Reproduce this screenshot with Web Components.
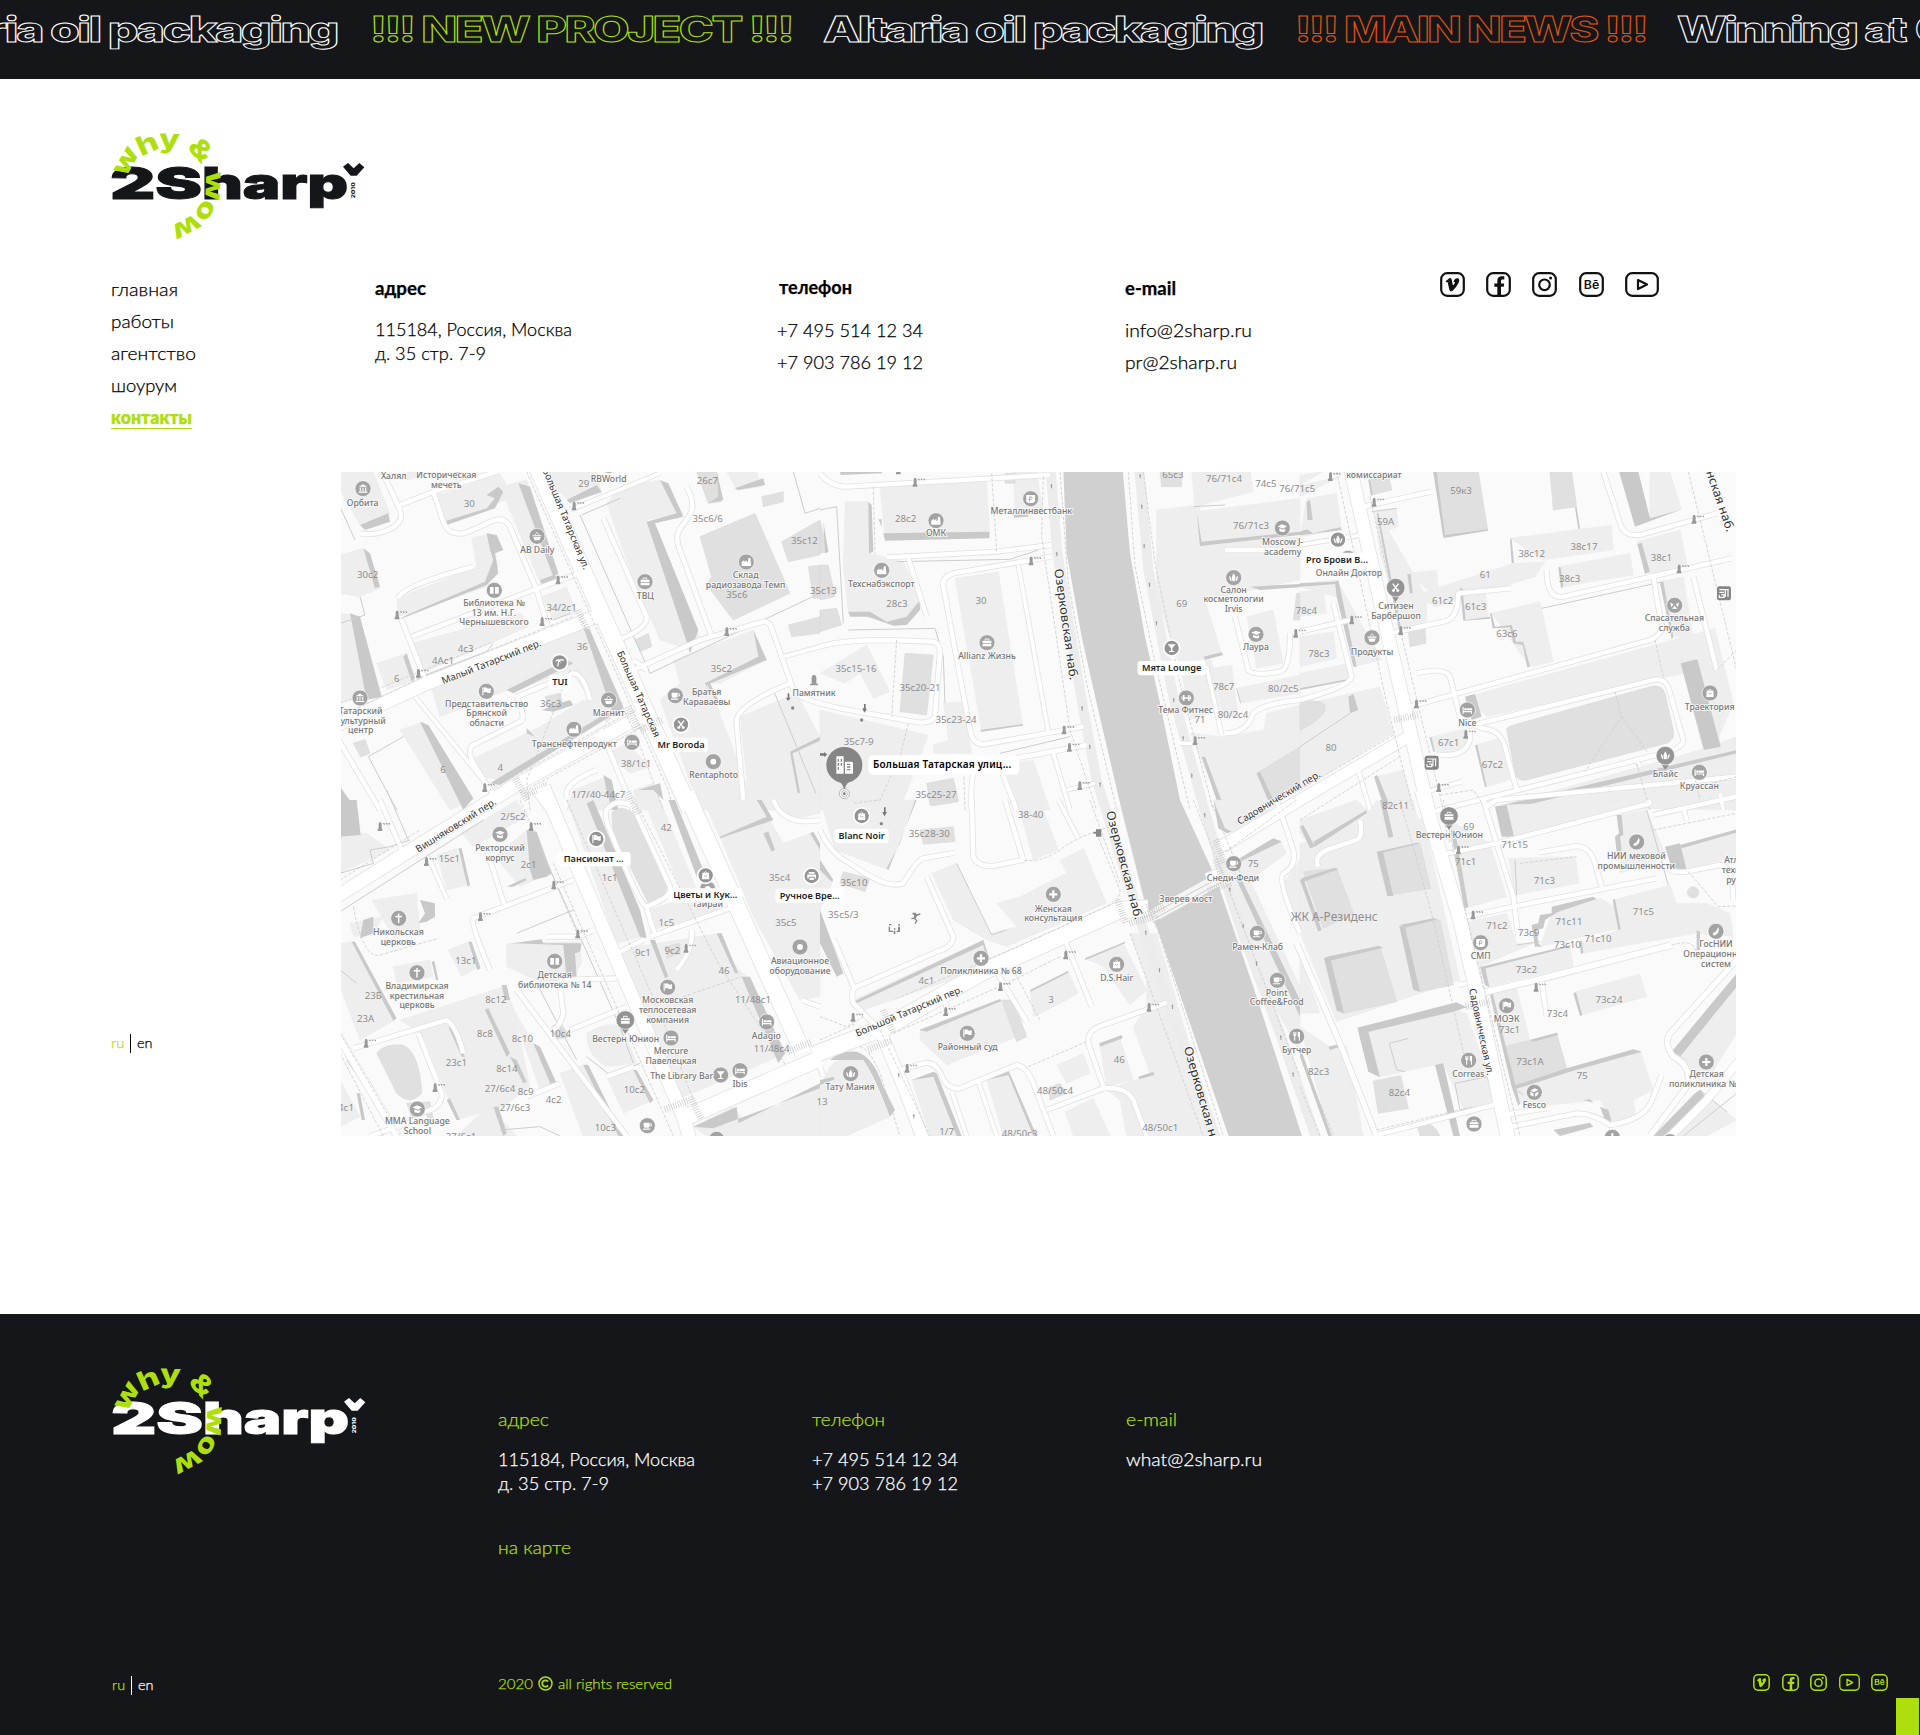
<!DOCTYPE html>
<html lang="ru">
<head>
<meta charset="utf-8">
<title>2Sharp — контакты</title>
<style>
html,body{margin:0;padding:0;background:#fff}
body{font-family:Lato,"Open Sans",sans-serif;font-weight:300;font-size:18px;color:#000;--green:#aedf0d;--dark:#15161a}
</style>
</head>
<body>
<contacts-page></contacts-page>
<script>
const def=(name,html,after)=>customElements.define(name,class extends HTMLElement{
  connectedCallback(){
    if(this.shadowRoot)return;
    const r=this.attachShadow({mode:'open'});
    r.innerHTML=typeof html==='function'?html(this):html;
    if(after)after(this,r);
  }
});

/* one line of text widened to a set measure */
def('fit-text','<style>:host{display:block;white-space:nowrap;width:max-content;-webkit-text-stroke:.25px currentColor}span{display:inline-block;transform-origin:0 50%}</style><span><slot></slot></span>',(el,r)=>{
  const s=r.querySelector('span'),w=+el.getAttribute('w');
  if(w){s.style.transform=`scaleX(${(w/s.getBoundingClientRect().width).toFixed(4)})`;el.style.width=w+'px';}
});

/* running line */
def('news-ticker',()=>{
  const items=[[-102,439,'Altaria oil packaging','#fff'],[370,422,'!!! NEW PROJECT !!!','#aedf0d'],[823,439,'Altaria oil packaging','#fff'],[1295,351,'!!! MAIN NEWS !!!','#e0560f'],[1677,228,'Winning at','#fff'],[1915,150,'Cannes','#fff']];
  return `<style>:host{display:block;height:79px;background:var(--dark);overflow:hidden}svg{display:block}text{font:800 35px Inter,sans-serif;letter-spacing:-1.800px;fill:var(--dark);fill-opacity:0;stroke-width:.95}</style><svg width="1920" height="79" viewBox="0 0 1920 79">${items.map(i=>`<text x="${i[0]}" y="41.8" textLength="${i[1]}" lengthAdjust="spacingAndGlyphs" stroke="${i[3]}">${i[2]}</text>`).join('')}</svg>`;
});

/* logo */
def('sharp-logo',()=>{
  const l=[['w',110,128,-60],['h',174,80,-24],['y',238,66,2],['&amp;',328,97,48],['w',368,201,92],['o',345,274,122],['w',288,322,152]];
  return `<style>:host{display:block;width:254px;height:106px}svg{display:block;overflow:visible}text{font-family:Inter,sans-serif}.b{font-weight:900;font-size:133px;fill:currentColor;stroke:currentColor;stroke-width:3}.g{font-weight:800;font-size:79px;fill:var(--green);text-anchor:middle}</style>
  <svg width="254" height="106" viewBox="63 42 762 318"><text class="b" x="60" y="240" textLength="276" lengthAdjust="spacingAndGlyphs">2S</text><text class="b" x="336" y="240" textLength="438" lengthAdjust="spacingAndGlyphs">harp</text>
  ${l.map(a=>`<text class="g" transform="translate(${a[1]} ${a[2]}) rotate(${a[3]}) scale(1.28 1)" y="21">${a[0]}</text>`).join('')}
  <path fill="currentColor" d="M759 143l15-11 17 16 17-16 15 13-23 25h-18z"/><text transform="translate(795 238) rotate(-90)" textLength="48" lengthAdjust="spacingAndGlyphs" font-size="13" font-weight="800" fill="currentColor">2010</text></svg>`;
});

/* social icons */
def('social-icon',el=>{
  const k=el.getAttribute('kind'),wide=k==='youtube',s=+el.getAttribute('size')||25,h=s,w=wide?(s<20?21:34):s;
  const g={
   vimeo:'<path fill="currentColor" stroke="none" d="M5.6 9.2L9 6.4c1.5-.9 2.5-.2 2.8 1.6l.7 4c.4 1.8 1 1.3 1.9-.3.8-1.400.7-2-.9-1.600.7-2.900 2.300-4.200 4.300-3.800 1.700.4 1.700 2.400.8 4.400-1.400 3-4 6.500-6.200 8.200-1.500 1-2.600.1-3.100-1.500L7.700 10.600c-.3-.9-.6-.7-1.500-.2z"/>',
   facebook:'<path fill="currentColor" stroke="none" d="M11.300 23.500v-8.700H8.300v-3.400h3V9c0-3.200 1.700-4.700 4.400-4.700h2.600v3.300h-1.700c-1.300 0-1.600.6-1.600 1.700v2.100h3.200l-.5 3.400H15v8.700z"/>',
   instagram:'<circle cx="12.500" cy="12.800" r="5.300"/><circle cx="18.600" cy="6" r="1.500" fill="currentColor" stroke="none"/>',
   behance:'<text x="4.800" y="16.800" font-family="Inter,sans-serif" font-weight="600" font-size="11.500" textLength="15.500" lengthAdjust="spacingAndGlyphs" fill="currentColor" stroke="none">Bē</text>',
   youtube:'<path stroke-linejoin="round" d="M13 8l9 4.500-9 4.500z"/>'};
  return `<style>:host{display:block}svg{display:block}</style><svg width="${w}" height="${h}" viewBox="0 0 ${wide?34:25} 25" preserveAspectRatio="none" fill="none" stroke="currentColor" stroke-width="2.200"><rect x="1.200" y="1.200" width="${wide?31.600:22.600}" height="22.600" rx="6"/>${g[k]}</svg>`;
});

def('lang-switch','<style>:host{display:flex;font-size:14.500px;line-height:19px;height:19px;-webkit-text-stroke:.25px currentColor}b{font-weight:inherit;color:var(--green);width:19px}i{width:1px;background:currentColor;margin-right:6px}span,b{position:relative;top:-1px}</style><b>ru</b><i></i><span>en</span>');

def('site-nav',`<style>:host{display:block;width:264px;line-height:32px}nav{display:flex;flex-direction:column;align-items:flex-start}.on{font-weight:800;color:var(--green);line-height:24px;height:24px;margin-top:4px;border-bottom:1px solid var(--green);box-sizing:border-box}</style>
<nav><fit-text w="67">главная</fit-text><fit-text w="63">работы</fit-text><fit-text w="85">агентство</fit-text><fit-text w="66">шоурум</fit-text><fit-text w="81" class="on">контакты</fit-text></nav>`);

/* contact column */
def('info-block','<style>:host{display:block;line-height:24px}.h{margin-bottom:var(--gap,17px);font-weight:var(--hw,700);color:var(--hc,inherit)}</style><div class="h"><slot name="title"></slot></div><slot></slot>');

/* ---------- city map ---------- */
/* each sheet is drawn at three units per pixel; o is the sheet's corner on the page */
const SHEETS=[
{o:[340,470],
 l:['0,5 100,5 150,130 60,165 0,60','200,5 290,5 200,30','310,70 480,10 520,80 320,160 275,70','480,50 560,30 655,320 600,340','395,205 450,190 475,290 440,350 175,440 170,385 410,290','0,255 70,235 120,355 60,380 0,370','0,430 40,435 100,670 0,700','110,580 200,550 225,630 140,660','215,520 545,430 565,470 245,610','605,380 680,350 710,430 640,450','270,640 500,560 690,480 730,470 830,720 800,760 690,600 560,650 490,665 300,740','390,870 600,770 730,690 850,700 480,930 420,920','590,5 770,5 785,70 685,90','800,100 840,50 960,30 1030,130 920,150 1080,500 1050,540 960,510 870,300','1000,570 1240,480 1280,570 1140,640 1100,640 1120,680 1250,1020 1080,1020 960,690 1020,640','180,780 250,755 400,990 330,1020','800,850 860,820 930,890 870,910','1200,740 1370,670 1440,800 1440,1020 1230,1020','700,960 800,920 830,1020 680,1020','880,960 940,940 970,1020 890,1020','1160,5 1250,5 1265,50 1190,60'],
 m:['1080,200 1245,130 1350,370 1180,450 1100,345 1115,320','1070,5 1130,5 1145,95 1105,100','1325,215 1440,150 1440,255 1345,275','1265,80 1330,65 1330,95 1270,110','1405,290 1440,285 1440,385 1420,385','1345,465 1440,440 1440,490 1355,500','885,510 925,490 935,530 900,545','40,820 75,808 90,850 62,862','615,680 660,670 670,710 630,720'],
 d:['60,165 145,130 150,155 75,180','310,155 440,115 465,85 440,75 475,50 490,65 465,115 320,165','535,40 570,50 655,310 640,320','600,330 640,315 660,325 605,342','440,190 470,195 490,240 465,250 475,310 440,345 175,450 200,435 435,335 460,270 450,240','70,235 90,250 120,350 105,355','30,430 60,440 125,680 80,690','960,30 985,40 1030,140 945,160 1075,480 1050,550 1035,500 920,155 1010,130','1240,480 1280,570 1100,645 1105,660 1095,640 1255,560','680,90 770,45 785,65 690,100','1130,5 1150,90 1105,100 1135,80','730,470 750,480 850,710 820,735','500,660 680,570 700,580 520,670','450,940 840,705 850,715 480,945','240,755 265,765 400,985 370,1020','190,560 200,550 225,625 215,635','340,5 370,5 350,30','1185,55 1270,25 1275,45 1195,60','0,950 50,1020 0,1020','790,915 815,930 835,1020 815,1020','605,720 660,700 690,690 700,705 640,725','560,775 585,800 560,790','895,960 960,940 970,990 940,960','1100,640 1110,640 1135,690 1125,690','1350,845 1440,800 1440,812 1358,850 1390,1020 1382,1020'],
 w:[[50,'M590,-10L790,440L1050,1020'],[40,'M-10,765L260,640L780,435'],[40,'M900,740L520,950L440,1000'],[14,'M60,190C120,200 200,170 180,120L120,-10'],[14,'M180,105L280,65L470,5'],[14,'M280,70C310,130 300,200 370,190C440,170 480,120 510,170L590,360L630,490'],[14,'M175,385Q180,350 400,290'],[14,'M730,305L580,360L215,500'],[14,'M185,450L260,640'],[12,'M690,120L960,10'],[14,'M790,145L920,440Q925,475 835,510'],[14,'M1040,50C1100,160 980,150 1020,240L1115,500'],[14,'M880,600L1080,510L1270,455Q1290,450 1300,490L1360,660Q1370,680 1440,700'],[12,'M1330,560L1440,530'],[12,'M225,680L470,980'],[14,'M530,680L700,610Q730,610 750,690'],[14,'M530,680Q560,750 540,755L400,825Q380,835 400,880L470,990'],[14,'M880,570L920,600'],[14,'M780,770L840,920L880,1020'],[14,'M680,980Q670,940 770,900'],[14,'M1210,990L1190,760Q1180,710 1350,640'],[40,'M590,950L640,1020'],[14,'M-10,800L120,1020']],
 t:['M560,5L985,960L1000,1020','M720,440L890,800L970,1020','M0,740L250,620L700,440','M0,700L130,650L460,515','M450,960L880,720','M540,970L870,790L960,740','M690,600L560,930L570,1020','M795,920L800,980'],
 f:['M720,135L930,610L1440,370','M725,135L840,85','M190,800L85,860L170,1020','M0,110L45,210','M1360,5L1395,130L1440,115','M60,380L75,435L0,460','M460,520L440,545L230,625','M690,430L640,450','M1300,660L1440,1000'],
 n:[['30',388,110],['29',731,52],['26с7',1102,41],['35с6/6',1103,156],['35с12',1393,221],['35с6',1191,383],['30с2',83,323],['34/2с1',665,424],['4с3',377,545],['4Ас1',309,581],['6',170,636],['36',727,541],['36с3',632,710],['35с2',1144,605],['6',309,908],['4',481,904],['38/1с1',888,890],['1/7/40-44с7',775,985],['35с13',1450,373]],
 p:[['museum',69,56,'Орбита',68,107],['',0,0,'Халял',161,28],['',0,0,'Историческая|мечеть',319,24],['dot',806,-14,'RBWorld',806,35],['basket',591,199,'AB Daily',592,249],['book',463,361,'Библиотека №|13 им. Н.Г.|Чернышевского',462,408],['case',915,335,'ТВЦ',916,387],['factory',1219,276,'Склад|радиозавода Темп',1217,325],['flag',439,664,'Представительство|Брянской|области',440,710],['basket',806,690,'Магнит',806,738],['factory',702,778,'Транснефтепродукт',703,830],['museum',60,684,'Татарский|культурный|центр',62,732],['cup',1006,677,'Братья|Караваевы',1100,676],['bed',876,817,'',0,0],['dot',1120,875,'Rentaphoto',1121,923]],
 k:[['palm',659,577,'TUI',660,645,66],['scissors',1023,764,'Mr Boroda',1023,833,160]],
 s:[[607,0,67.5,29,'Большая Татарская ул.',325],[830,548,66,29,'Большая Татарская',280],[310,643,-21.500,29,'Малый Татарский пер.',318]],
 g:[[702,108],[654,330],[171,435],[606,455],[235,610],[1160,485],[434,953]],z:[[730,455,65],[545,960,60],[590,960,-25],[880,745,65],[935,765,-25]]},
{o:[820,470],
 l:['180,50 500,35 510,200 195,205','580,5 650,5 670,130 585,140','75,95 145,95 150,250 250,275 300,380 290,420 230,460 85,430 70,290','405,325 535,305 608,765 485,785','0,610 140,525 210,665 160,685 120,610 75,640','0,720 325,795 240,1020 0,1020','370,700 430,695 455,850 340,850 340,825 385,810','1010,120 1140,105 1140,220 1440,200 1440,330 1155,390 1205,550 1080,590 1010,380','1115,5 1290,5 1300,65 1125,110','1130,125 1440,85 1440,190 1140,220','1280,440 1360,420 1390,580 1310,595','1080,580 1175,570 1200,720 1110,750','1175,595 1235,585 1255,740 1210,740','1250,655 1440,615 1440,670 1260,700','1110,790 1210,800 1330,780 1340,730 1440,705 1440,960 1290,1020 1210,1020','550,880 640,870 690,1020 600,1020','60,5 180,5 190,10'],
 m:['255,550 340,555 320,735 240,725','320,940 400,925 415,990 330,1005','1020,5 1085,5 1085,50 1025,50','0,420 50,415 65,465 0,485','0,285 25,285 45,380 0,390','1430,370 1440,370 1440,450 1420,450','0,155 25,245 0,250','1310,910 1440,830 1440,960 1360,1000','555,10 585,10 585,40 555,40'],
 d:['190,190 508,185 508,205 195,212','145,95 155,105 160,245 147,250','85,425 150,425 200,455 260,440 300,390 300,420 260,465 220,467 145,440 90,440','480,780 608,762 608,767 485,785','1130,125 1145,215 1440,185 1440,195 1140,228','1310,910 1320,905 1365,1000 1350,1005','1150,560 1205,547 1210,555 1155,570','60,5 185,5 185,10 62,15','10,155 25,245 15,250','175,148 185,148 185,170','1290,350 1440,342 1440,352 1320,360','580,135 625,130 625,140 582,143','1145,860 1155,860 1215,1020 1200,1020'],
 w:[[14,'M0,10Q30,50 80,50L690,15'],[14,'M200,262L530,245L695,225'],[14,'M265,265L320,440'],[14,'M695,260L400,310Q365,320 370,350L450,780Q460,830 500,822L790,770'],[12,'M595,285L685,785'],[14,'M0,530Q60,510 200,510L340,515Q365,520 358,570L345,740Q330,765 280,755L60,715L0,700'],[14,'M800,825L560,870L470,895Q450,910 455,1020'],[12,'M700,850L750,1020'],[12,'M740,960L825,940'],[14,'M1215,790Q1280,790 1300,730Q1330,700 1440,690'],[14,'M1245,440L1285,600Q1300,620 1380,605Q1410,600 1410,490'],[14,'M1215,240L1440,240'],[12,'M1080,820L1130,820'],[12,'M1160,590L1205,795'],[14,'M540,890L590,1020']],
 t:['M160,50L165,250','M515,10L530,245','M670,20L665,200L750,780L830,1020','M720,5L745,340L800,640L890,1020','M925,5L945,290L1010,600L1110,1020','M970,5L1005,280L1080,640L1180,1020','M230,510L215,740','M265,760L240,860L180,990L100,1000','M430,860L435,1020'],
 f:['M0,120L50,110L70,460','M85,480L345,475L370,560L375,700','M230,275L570,268L655,240','M1120,110L1215,105','M540,850L750,800','M1250,655L1262,700'],
 n:[['28с2',257,155],['28с3',231,411],['30',483,403],['35с15-16',108,607],['35с20-21',300,662],['35с23-24',408,758],['35с7-9',116,825],['35с25-27',348,985],['65с3',1059,23],['76/71с4',1212,35],['74с5',1338,50],['76/71с5',1432,67],['76/71с3',1293,177],['69',1085,411],['78с3',1497,561],['78с4',1459,433],['78с7',1211,661],['80/2с5',1390,667],['80/2с4',1239,743],['71',1140,760]],
 p:[['factory',348,152,'ОМК',348,197],['factory',185,301,'Техснабэкспорт',184,351],['rub',632,86,'Металлинвестбанк',634,133],['case',501,518,'Allianz Жизнь',501,567],['cap',1387,174,'Moscow J-|academy',1388,225],['flower',1241,323,'Салон|косметологии|Irvis',1241,368],['cap',1308,493,'Лаура',1308,541],['dumb',1099,684,'Тема Фитнес',1097,730],['statue',-18,630,'Памятник',-18,678]],
 k:[['bar',1055,534,'Мята Lounge',1055,603,205]],
 s:[[703,298,82,36,'Озерковская наб.',337]],
 g:[[285,37],[633,273],[732,780],[748,832],[779,947],[1125,812],[1427,490],[235,0]],z:[]},
{o:[1300,470],
 l:['0,15 70,5 0,45','0,45 120,20 0,80','20,85 110,70 125,180 0,200','0,340 110,330 245,570 165,590 110,380 0,350','225,125 290,115 295,170 265,180 380,380 380,470 310,480 240,250','325,310 410,300 415,355 390,365','330,380 640,280 735,275 705,320 410,410 330,375','630,205 935,165 940,240 730,270','775,290 990,250 1000,315 790,350','480,360 555,345 565,445 500,450','575,430 720,395 760,575 690,590','400,365 460,355 460,395 400,410','1010,215 1140,180 1165,300 1045,310','1080,335 1150,320 1180,500 1120,500','500,680 1245,475 1300,700 1240,840 1200,600 560,740','1140,570 1240,570 1260,830 1210,840','590,1010 1200,840 1310,800 1310,1020','0,500 100,485 110,565 0,590','0,610 145,580 145,630 0,660','0,365 70,360 80,430 0,440','0,705 240,650 280,790 0,960','395,800 500,775 510,835 410,850','525,825 600,805 630,930 560,950','1050,5 1110,5 1145,120 1050,145','225,920 310,900 345,1020 260,1020'],
 m:['400,5 535,5 563,180 435,200','750,5 815,5 830,110 760,120','205,10 265,5 275,60 215,75','325,485 375,475 378,520 330,530','620,780Q620,770 640,765L1050,650Q1085,640 1095,670L1120,780Q1125,810 1100,820L680,930Q650,935 645,910','0,692Q80,690 76,710Q80,740 0,782'],
 d:['957,5 1015,5 1050,145 1140,120 1005,170','1012,222 1025,218 1050,305 1035,312','1080,340 1090,335 1120,500 1115,508','1142,580 1192,568 1262,830 1212,840','495,680 525,672 545,740 515,750','400,5 410,5 435,195 430,205','435,195 563,178 563,182 432,204','322,312 332,312 338,370 330,370','480,355 487,355 497,450 570,440 570,446 490,452','570,430 575,430 585,470 635,465 648,515 670,515 690,590 682,592 668,525 640,520 630,472 578,475','630,208 635,208 642,278 635,280','775,292 782,292 790,350 783,355','525,825 532,825 560,950 555,952','388,802 395,802 405,845 400,845','222,920 232,915 275,1020 255,1020','105,335 115,330 170,590 160,590 110,380','0,340 105,335 108,342 0,350','20,95 30,90 38,150 22,150','0,185 20,178 40,190 120,172 125,180 0,196','145,680 160,672 175,720 150,730','0,655 145,627 145,632 0,660','230,130 235,130 305,480 300,500','585,1010 1310,840 1310,850 620,1020','205,30 210,30 218,75 213,78','825,112 830,112 840,175 835,178'],
 w:[[40,'M150,-10L260,480L330,780L385,1020'],[34,'M-240,1130L0,990L325,800'],[14,'M190,110L395,65'],[12,'M0,225L185,195'],[14,'M0,485L150,450'],[14,'M270,490L430,455Q475,450 475,370L635,355'],[14,'M740,300Q740,390 790,380L1295,265'],[14,'M910,5L960,160Q970,200 1020,195L1250,130'],[14,'M330,710L1050,510Q1100,490 1080,440L1060,320'],[14,'M350,610Q430,590 450,620L480,740Q520,770 570,780Q610,790 620,850L650,960'],[14,'M500,770L1060,630Q1100,620 1110,670L1150,810Q1150,840 1050,860L380,1030'],[14,'M100,400L155,620Q150,650 0,690'],[14,'M420,855Q520,860 510,780'],[14,'M1180,320L1250,600'],[14,'M560,1010L590,990L1310,920'],[12,'M380,965L485,935'],[12,'M1260,970L1270,1020'],[12,'M1010,870L1020,890'],[12,'M175,900L210,1020']],
 t:['M110,5L260,700L340,1020','M210,80L310,520L430,1020','M0,960L280,795','M0,1050L300,860','M945,665L965,740L855,905','M965,740L1045,850','M1165,5L1310,600','M1250,600L1310,540','M1065,510L1090,620','M420,975L520,960L560,1020','M1010,880L1050,1020','M1180,900L1200,990','M1310,920L1200,950'],
 f:['M725,415L1090,335','M215,125L290,115','M0,830L150,730'],
 n:[['59к3',483,72],['59А',257,164],['38с12',695,260],['38с17',852,239],['38с1',1084,274],['61',556,325],['38с3',809,335],['61с2',428,402],['61с3',527,419],['63с6',621,501],['67с1',446,828],['67с2',577,893],['80',93,843],['82с11',287,1016]],
 p:[['',0,0,'Военный|комиссариат',222,-6],['flower',144,265,'Онлайн Доктор',147,318],['basket',216,503,'Продукты',216,555],['scissors+',287,353,'Ситизен|Барбершоп',288,418],['bed',502,720,'Nice',502,767],['rescue',1124,406,'Спасательная|служба',1123,454],['bag',1230,669,'Траектория',1229,720],['flower+',1096,857,'Блайс',1096,922],['bed',1198,907,'Круассан',1198,957],['metro',1272,370,'',0,0],['metro',395,878,'',0,0]],
 k:[['flower',114,209,'Pro Брови В...',111,278,208]],
 s:[[1218,6,71,36,'нская наб.',192],[-181,1065,-31,29,'Садовнический пер.',285]],
 g:[[91,20],[222,97],[1182,148],[1137,297],[155,450],[302,482],[349,702],[497,793],[416,953]],z:[[320,742,-12]]},
{o:[340,800],
 l:['365,100 530,0 560,50 400,140','290,165 350,145 385,255 320,270','465,170 560,90 630,220 540,260','95,300 230,280 240,390 160,410','30,370 130,350 100,400 40,410','0,430 40,425 165,660 60,720 0,560','325,450 385,425 415,500 365,530','500,430 720,425 725,490 695,540 600,545 500,500','160,500 270,480 280,530 170,550','180,660 490,560 520,620 570,860 490,920 350,960 250,710','680,0 740,0 910,410 830,430','910,0 960,0 1075,280 1040,310','820,450 1140,400 1170,480 1220,530 1340,760 1010,900','920,330 1050,290 1160,330 940,390','1085,-10 1250,-10 1300,60 1140,115','1260,-20 1440,-20 1440,40 1350,60 1310,20','1140,110 1290,60 1330,130 1410,100 1440,150 1440,590 1380,600 1240,350','660,820 740,790 840,1010 730,1010','800,830 880,810 940,900 850,940','510,610 580,730 640,860 600,870','400,960 450,920 530,1008 350,1008','0,840 60,950 0,980','0,100 80,100 150,150 0,220','740,700Q800,660 850,680L890,790L800,800Q740,770 740,700','1060,980 1180,920 1210,960 1440,860 1440,1008 1100,1008'],
 m:['815,40Q840,10 880,40L980,260Q980,310 925,310L820,100','110,760Q130,730 190,735Q240,760 245,880Q210,920 170,880','975,440 1020,430 1020,460 980,475','200,910 270,905 280,960 220,970','635,680 660,665 690,710 640,720'],
 d:['0,0 50,0 62,105 0,110','740,10 760,0 900,330 920,415 900,410','560,90 590,95 635,220 620,230 580,240 570,210','500,260 555,235 560,240 520,260','70,360 100,350 100,400 60,415','240,300 285,310 285,350 260,365 235,370 255,340','35,425 45,425 170,655 160,662','355,145 365,145 390,255 383,260','385,425 395,425 422,505 412,510','515,430 605,418 610,430 725,430 720,455 705,460 710,530 680,540 670,435','485,555 500,555 510,600 495,600','435,630 445,625 510,760 500,770','510,770 530,780 560,845 550,850','325,680 335,680 375,770 365,770','1140,110 1280,50 1250,0 1265,0 1300,60 1140,115','1270,100 1285,95 1305,150 1295,155','1410,100 1420,95 1440,130 1440,150','1205,530 1230,530 1335,760 1315,790','1130,400 1145,400 1195,520 1185,520','930,420 945,420 985,530 975,535','985,0 1005,0 1090,210 1070,230','730,795 745,795 850,1008 835,1008','880,810 890,810 940,900 930,910','50,880 60,880 75,960 65,960','1060,980 1190,920 1195,970 1440,850 1440,865 1120,985','460,920 475,920 500,1000 490,1008','580,730 600,740 650,850 635,860','275,485 283,483 295,540 288,540','320,900 330,895 360,960 350,960'],
 w:[[40,'M440,10L180,170L-10,290'],[40,'M610,-40L830,480L1030,950L1050,1020'],[50,'M1040,-20L1070,50L1390,760'],[48,'M1020,960L1440,775'],[14,'M800,30Q830,-10 880,20L990,260Q1000,290 920,320Q900,320 810,90Q790,50 800,30'],[14,'M920,325L945,405'],[14,'M930,410L1170,325'],[14,'M700,240L400,355Q390,370 450,510'],[14,'M440,150L495,320'],[12,'M265,170L320,295'],[14,'M40,745L320,660Q350,680 370,760'],[14,'M235,700L305,880Q310,930 230,940'],[14,'M620,410L715,410L760,390'],[14,'M530,570L860,1008'],[14,'M660,540L830,535'],[14,'M690,690L860,620'],[14,'M660,560L670,640Q660,680 640,690'],[14,'M830,460Q870,440 910,420'],[14,'M1055,390Q1060,450 1010,510'],[14,'M1300,0Q1330,80 1440,60'],[22,'M-10,700L180,1020'],[14,'M120,0L190,160'],[14,'M800,830L880,800'],[14,'M90,1008L260,950'],[14,'M1385,600L1440,620'],[14,'M560,890L660,850']],
 t:['M40,320Q70,480 120,465L295,415','M0,240L240,90','M640,190L1000,1008','M680,0L960,640L1060,900','M540,0L720,420','M0,700L180,1008','M0,760L130,1008','M1030,590L1205,530','M900,30L1140,500L1340,800'],
 f:['M0,335L430,60','M140,-30L205,120','M600,140L840,680L880,790','M0,220L100,190L90,150L150,140L210,120','M530,400L700,330','M740,770L810,825L900,790','M0,510L50,550','M590,550L710,780','M480,990L600,980L660,1008','M20,780L180,1008'],
 n:[['2/5с2',519,59],['42',979,93],['15с1',328,186],['2с1',566,204],['1с1',809,244],['35с4',1319,242],['1с5',979,379],['35с5',1338,379],['13с1',378,493],['9с1',909,467],['9с2',997,463],['46',1152,521],['11/48с1',1239,608],['23Б',100,596],['23А',77,665],['8с12',468,610],['8с8',435,710],['10с4',661,710],['8с10',547,725],['23с1',349,797],['8с14',501,815],['11/48с4',1295,756],['27/6с4',480,875],['8с9',557,886],['4с2',641,909],['10с2',883,878],['27/6с3',525,933],['4с1',18,933],['10с3',796,992],['27/6с1',363,1019],['13',1446,916]],
 p:[['cap',480,103,'Ректорский|корпус',480,153],['cross',176,355,'Никольская|церковь',175,405],['cross',231,518,'Владимирская|крестильная|церковь',231,567],['book',644,484,'Детская|библиотека № 14',644,534],['flag',983,562,'Московская|теплосетевая|компания',983,610],['case+',856,660,'Вестерн Юнион',857,726],['bed',993,714,'Mercure|Павелецкая',993,763],['dot',1380,441,'Авиационное|оборудование',1380,492],['bed',1280,666,'Adagio',1279,716],['bar',1142,825,'The Library Bar',1025,836],['bed',1200,812,'Ibis',1200,861],['cap',232,927,'MMA Language|School',232,972],['dot',1103,267,'Тайрай',1103,322],['cup',922,977,'',0,0],['plain',1130,1018,'',0,0]],
 k:[['flag',769,117,'Пансионат ...',761,186,222],['bag',1097,226,'Цветы и Кук...',1096,295,222],['printer',1415,228,'Ручное Вре...',1409,296,205]],
 s:[[235,158,-32,29,'Вишняковский пер.',278]],
 g:[[120,80],[573,80],[259,185],[641,255],[421,350],[713,402],[78,730],[1038,445],[285,863]],z:[[1380,740,-22],[1010,915,-20],[1068,925,65],[880,10,65]]},
{o:[820,800],
 l:['0,0 285,0 205,210 45,150','590,0 660,0 715,150 640,180','335,220 410,190 510,400 590,380 530,310 600,290 740,220 720,180 790,145 860,310 560,440 500,420 400,360','100,600 490,420 510,500 130,630','630,570 745,515 775,580 740,600 640,650','795,475 910,430 980,570 930,615 850,500','300,690 540,600 620,700 440,770 380,795 300,720','930,400 980,540 980,620 940,680 960,740 1060,1008 1190,1008 1010,400','840,740 900,715 940,840 860,860','860,870 1000,820 1060,1008 920,1008 900,900','710,795 790,760 810,820 740,850','0,860 30,800Q60,760 130,770L210,950L80,1008L0,1008','275,840 340,820 410,1008 330,1008','500,840 565,815 650,1008 550,1008','735,935 820,895 870,1008 760,1008','1180,0 1380,0 1280,90 1220,95','1250,180 1380,120 1400,160 1290,240 1440,560 1440,760 1360,610 1210,250','0,180 40,240 0,330','1390,250 1440,180 1440,400'],
 m:['300,90 400,80 405,125 310,133','70,215 150,235 135,275 60,250','545,600 580,600 620,710 590,725','685,865 720,850 740,880 690,900','330,0 415,0 415,5 335,18'],
 d:['100,605 490,420 510,480 500,480 490,435 110,610','240,130 285,0 290,0 205,210 200,205','630,570 745,512 745,518 632,575','795,475 915,425 915,430 797,480','300,690 540,597 545,603 320,695','838,730 905,705 908,715 840,740','955,830 1000,815 1003,825 958,838','30,780Q60,750 110,755Q160,770 190,860L225,930L210,950Q160,820 130,780','275,840 340,815 350,820 425,1008 410,1008 340,830','500,840 565,810 650,1008 640,1008 565,825','1180,0 1215,85 1235,95 1220,100 1195,85','0,330 70,520 50,530 0,430','1250,240 1265,240 1440,600 1440,650','1250,180 1360,115 1385,125 1260,185','0,840 40,830 45,838 0,855','0,180 40,240 35,245 0,210'],
 w:[[50,'M-20,765L200,680L500,510L900,330L985,325'],[34,'M1210,140L1440,0'],[36,'M180,690L250,860L310,1020'],[14,'M455,0L460,170Q470,200 520,198L610,180L555,0'],[12,'M715,0L775,115'],[14,'M0,90Q30,160 90,190Q200,270 250,250Q290,180 310,175L405,158'],[14,'M320,230L400,410Q400,440 350,455L110,560Q90,570 100,610L180,690'],[14,'M40,415L105,570'],[14,'M735,420L815,620'],[14,'M1040,608L850,675Q800,690 805,730L850,860'],[14,'M680,930L850,865Q920,860 940,900L980,1008'],[14,'M240,810L310,790Q350,780 370,840Q390,870 420,865L590,795Q620,800 640,850L700,1008'],[12,'M395,875L440,1008'],[12,'M475,845L530,1008'],[14,'M520,500L620,665'],[14,'M370,590L385,640'],[14,'M1370,0L1420,150Q1430,200 1390,220Q1370,240 1440,400'],[14,'M0,800L10,830'],[30,'M1160,235L1200,220']],
 t:['M870,80Q770,110 720,150Q660,190 610,180','M830,100L900,270Q900,300 860,320L570,450L220,600','M0,650L80,680L130,650','M220,700L560,550L720,470','M585,520L660,660','M0,720L110,670','M120,740Q150,750 180,820L240,1008','M625,800L800,725','M180,690L330,1008','M930,400L1150,1008','M1010,380L1210,1008','M810,0L900,250','M1120,0L1200,200L1440,830','M1170,0L1270,240','M1430,0L1210,160'],
 f:['M410,190L515,405L560,390','M300,690L540,600'],
 n:[['38-40',632,54],['35с28-30',328,112],['35с10',102,257],['35с5/3',70,353],['75',1300,200],['4с1',319,551],['3',693,609],['46',898,788],['48/50с4',705,883],['1/7',380,1006],['48/50с3',599,1012],['48/50с1',1021,992]],
 p:[['plus',700,283,'Женская|консультация',700,335],['plus',483,475,'Поликлиника № 68',483,523],['bag',890,493,'D.S.Hair',890,542],['flag',442,700,'Районный суд',443,750],['flower',92,821,'Тату Мания',90,870],['cup',1241,191,'Снеди-Феди',1239,242],['cup',1312,400,'Рамен-Клаб',1313,449],['cup',1372,541,'Point|Coffee&amp;Food',1370,587],['fork',1430,709,'Бутчер',1430,758],['',0,0,'Зверев мост',1098,306]],
 k:[['bag',125,48,'Blanc Noir',125,116,162]],
 s:[[858,36,75,36,'Озерковская наб.',337],[1091,743,74,36,'Озерковская наб.',337],[112,710,-23,29,'Большой Татарский пер.',345]],
 g:[[99,652],[541,560],[737,465],[377,635],[261,805],[987,622]],z:[[905,335,70],[965,360,-15],[1000,345,65],[1000,335,-20],[205,665,65],[180,735,-20],[1200,155,70],[1200,215,70],[1200,260,-20]]},
{o:[1300,800],
 l:['0,60 170,0 200,30 160,90 30,140 0,100','270,0 340,0 360,90 275,110','0,130 160,90 230,0 370,60 480,540 110,665 0,400','450,60 570,130 620,290 495,325','600,15 1030,0 1040,25 640,110','625,175 825,170 838,250 645,285','760,330 900,295 960,330 960,385 720,440','940,300 1110,255 1130,310 1220,310 1290,340 1300,410 1190,400 960,440 850,460 840,430 955,390','505,365 620,340 650,430 700,430 540,500','550,500 810,440 820,500 565,560','570,580 650,565 690,720 615,750','825,575 1020,522 1040,590 845,645','640,860 1020,750 1060,870 1000,900 1010,960 940,970 900,900 700,920 660,910','180,690 460,625 500,640 590,900 500,950 430,790 240,830','220,840 305,825 325,925 235,940','960,45 1040,30 1100,170 960,220','1140,140 1310,90 1310,170 1160,210','1130,750 1310,540 1310,700 1210,860','0,470 60,640 0,640','0,680 90,740 140,740 190,1008 90,1008','1200,870 1310,960 1220,1008 1080,1008'],
 m:['10,215 110,205 160,340 70,385','245,155 360,130 392,265 270,285','85,470 240,440 290,605 130,640','310,380 420,360 460,555 360,575','615,740 770,700 800,805 640,860','220,845 300,828 325,925 235,940','1162,277Q1165,260 1180,260Q1197,265 1197,278Q1195,293 1178,294Q1163,292 1162,277','350,970Q400,960 420,1008L360,1008'],
 d:['230,155 248,152 280,288 262,288','232,155 350,128 360,130 245,158','0,240 10,235 65,390 55,395','5,235 105,203 115,208 10,245','72,475 90,472 132,640 110,632','75,472 235,438 250,443 90,482','298,378 315,380 360,575 340,570','300,375 400,355 415,358 315,383','172,683 205,695 240,832 205,815','172,683 470,607 500,622 460,635 200,697','240,0 255,0 280,110 265,113','585,20 620,15 642,110 605,110','452,90 465,90 505,322 492,325','755,320 880,290 890,297 775,335 735,360 730,385 710,390 715,430 725,440 705,440 695,375 715,370 720,345 755,340','938,300 945,297 962,388 955,390','540,500 555,500 568,562 555,555','545,500 810,435 812,440 550,507','570,585 578,580 660,910 655,918 635,860','690,720 770,698 775,705 700,725','820,580 828,577 847,645 840,648','800,805 1000,748 1025,755 820,812 645,868 640,858','405,795 430,790 480,1008 460,1008','1095,140 1140,130 1160,210 1115,205','1140,135 1310,88 1310,98 1145,145','950,45 965,45 970,105 960,110 965,155 950,155 945,110 957,100','1115,755 1310,520 1310,560 1140,770 1180,790','1185,880 1200,870 1220,895 1090,1008 1060,1008','900,920 925,930 935,965 915,960','850,900 870,898 880,908','760,990 870,968 880,980 780,1008','0,740 95,1008 85,1008 0,770','85,740 115,733 120,740 90,750','1190,390 1200,395 1200,450 1190,450','0,80 10,75 45,140 30,145','838,425 845,420 850,458 843,462','40,125 45,140 200,40 200,30'],
 w:[[42,'M365,-30L480,360L540,620L625,1020'],[14,'M550,0L590,130L640,290L655,410'],[14,'M420,165L590,130L1050,10L1045,0'],[14,'M715,158L830,138Q870,140 885,190L905,260'],[14,'M475,355L640,320L1070,235'],[14,'M475,555L500,550'],[18,'M540,580L730,535L1115,435'],[14,'M725,545L740,650'],[16,'M-10,430L120,730L230,1010'],[14,'M230,1005L600,910'],[14,'M610,945L740,925'],[14,'M610,985L830,940Q880,940 930,975Q1040,960 1060,890L1085,825'],[16,'M1310,480L1110,700Q1090,730 1120,770Q1180,800 1160,860L1050,1008'],[14,'M55,200Q40,170 80,150L170,120Q190,110 180,60'],[14,'M1060,45L1310,-10'],[12,'M1150,20L1160,60'],[14,'M1100,200Q1110,220 1160,215L1260,195Q1300,195 1300,300'],[24,'M1100,1020L1220,900L1320,780']],
 t:['M300,0L400,360L500,800','M430,0L500,350L660,1008','M1060,90L1310,40','M1165,215L1255,320L1310,318','M1115,435Q1170,420 1180,440L1215,490','M660,190L830,170','M230,990L520,920','M0,860L60,1008','M0,760L100,1008','M430,60L450,130','M470,170L490,260'],
 f:['M1040,30L1105,255','M268,730L325,715M268,730L290,810L315,815','M1200,870L1280,935','M645,180L650,285','M465,850L560,830L590,910L480,930Z','M645,868L670,885','M1150,1008L1310,880','M650,435L720,425'],
 n:[['69',506,89],['71с15',644,143],['71с1',497,196],['71с3',733,251],['71с5',1030,345],['71с2',591,387],['71с11',807,374],['73с9',686,407],['71с10',894,426],['73с10',802,444],['73с2',679,518],['73с24',927,608],['73с4',772,651],['73с1',628,699],['73с1А',690,796],['75',847,838],['82с3',56,825],['82с4',298,887]],
 p:[['case+',447,48,'Вестерн Юнион',448,115],['horn',1010,126,'НИИ меховой|промышленности',1009,177],['rub',542,428,'СМП',542,477],['horn',1248,394,'ГосНИИ|Операционных|систем',1248,442],['flag',620,617,'МОЭК',620,665],['fork',506,781,'Correas',505,831],['box',703,877,'Fesco',703,923],['plus',1219,786,'Детская|поликлиника № 3',1220,832],['case',522,972,'',0,0],['plus',937,1012,'',0,0],['plain',1110,1025,'',0,0],['',0,0,'Атлант|технике|рукой',1316,190]],
 k:[],
 s:[[507,568,78,29,'Садовническая ул.',265]],
 g:[[475,150],[519,345],[708,562]],z:[[535,612,-12]]}
];
const GLYPH={
 museum:'<path d="M-12-5L0-12 12-5zM-9-3h3V7h-3zM-1.500-3h3V7h-3zM6-3h3V7H6zM-12 8h24v3h-24z"/>',
 basket:'<path d="M-12-3h24v3h-24zM-10 2h20L7 11H-7z"/><path d="M-6-3L0-11l6 8" fill="none" stroke="#fff" stroke-width="2"/>',
 book:'<path d="M-12-9h10v18h-10zM2-9h10V9H2z"/>',
 case:'<path d="M-12-5h24V1h-24zM-12 3h24v7h-24z"/><path d="M-5-6v-4H5v4" fill="none" stroke="#fff" stroke-width="2.500"/>',
 factory:'<path d="M-13 11V0l7-5v5l7-5V0h3l2-11h5l2 22z"/>',
 flag:'<path d="M-11-11h3v22h-3zM-7-10Q-1-13 2-9T12-9V4Q6 6 2 3T-7 4z"/>',
 bed:'<path d="M-13-8h3V3h23v7h-3V6h-20v4h-3zM-1-5h14v6H-1z"/><circle cx="-5" cy="-2" r="3.500"/>',
 cup:'<path d="M-10-8H6V0Q6 6-2 6T-10 0zM-12 8H8v3h-20z"/><path d="M6-5h5V1H6" fill="none" stroke="#fff" stroke-width="2.500"/>',
 scissors:'<path d="M-8-11L5 6M8-11L-5 6" stroke="#fff" stroke-width="4"/><circle cx="-6" cy="8" r="4"/><circle cx="6" cy="8" r="4"/>',
 palm:'<path d="M-12-2Q-10-10 0-8 10-12 13-4L0-5 5 3-2-2-3 11h-4L-4-4z"/>',
 dot:'<circle r="8"/>',plain:'',
 cross:'<path d="M-2-13h4v6h7v4H2v16h-4V-3h-7v-4h7z"/>',
 plus:'<path d="M-3-11h6v8h8v6H3v8h-6V3h-8v-6h8z"/>',
 bag:'<path d="M-9-7H9l1 18h-20z"/><path d="M-4-5Q0-17 4-5" fill="none" stroke="#fff" stroke-width="2"/><path d="M-4 0Q0 6 4 0" fill="none" stroke="#999" stroke-width="2"/>',
 cap:'<path d="M-13-4L-1-10 13-5 2 2zM-8 1L2 5 8 2V9Q0 13-8 8z"/>',
 flower:'<path d="M0-12Q8-2 3 10H-3Q-8-2 0-12zM-12-5Q-12 8-5 10L-8-2zM12-5Q12 8 5 10L8-2z"/>',
 bar:'<path d="M-11-10h22L2 0v8h5v3H-7V8h5V0z"/>',
 fork:'<path d="M-9-12h2v6h1v-6h2v6h1v-6h2v9l-3 3v12h-3V0l-2-3zM3-12h6V12H6V2H3z"/>',
 rub:'<path d="M-12-10h24V9H8v3h-16V9h-4z"/><path d="M-3 8V-5h5q4 4 0 7h-8" fill="none" stroke="#999" stroke-width="2"/>',
 dumb:'<path d="M-13-4h3v8h-3zM-9-8h4V8h-4zM5-8h4V8H5zM10-4h3v8h-3zM-5-2H5v4H-5z"/>',
 rescue:'<path d="M-12-8L-3-3-9 5zM12-8L3-3 9 5zM-7 10L0 1 7 10z"/>',
 printer:'<path d="M-8-11H8v5H-8zM-12-4h24V7H8V2H-8v5h-4zM-6 5H6v6H-6z"/>',
 horn:'<path d="M6-12Q12 2 0 9-8 14-9 7-8 2-2 2 3-4 6-12z"/>',
 box:'<path d="M-11-5L1-11 11-7-1 0zM-11-2L-2 3V12L-11 7zM2 3L11-3V6L2 12z"/>',
 build:'<path d="M-24-26H-2v52h-22zM2-10h20q4 0 4 5v31H2z"/><path d="M-18-18v8m9-8v8m-9 4v8m9-8v8m-9 4v8M8-2h10M8 6h10M8 14h10" fill="none" stroke="#888" stroke-width="4"/>'
};
def('city-map',()=>{
  const each=f=>SHEETS.map(s=>`<g transform="translate(${s.o[0]} ${s.o[1]}) scale(.33333)">${f(s)}</g>`).join('');
  const shape=(a,c)=>a.map(p=>`<path class="${c}" d="${p.includes('Q')?'M'+p:'M'+p.split(' ').join('L')}Z"/>`).join('');
  const icon=(k,x,y,ring)=>{
    if(!k)return'';
    if(k==='metro')return `<g transform="translate(${x} ${y})"><rect x="-21" y="-21" width="42" height="42" rx="7" fill="#858585"/><path d="M-14-11H14M-14-3H0M4-11V11M12-11V11M-14 4v8H0V4h-8" fill="none" stroke="#fff" stroke-width="3.500"/></g>`;
    if(k==='statue')return `<path transform="translate(${x} ${y})" d="M-12 16h24v-5H7V-9L3-15h-6l-4 6v20h-5z" fill="#999"/>`;
    const pin=k.endsWith('+'),n=k.replace('+','');
    return `<g transform="translate(${x} ${y})">${pin?'<path d="M-14 22L0 42 14 22z" fill="#8f8f8f"/>':''}<circle r="${pin?28:24}" fill="${ring||pin?'#949494':'#a3a3a3'}" stroke="#fff" stroke-width="${ring?5:2}"/><g fill="#fff" transform="scale(1.1)">${GLYPH[n]}</g></g>`;
  };
  const lines=(t,x,y,c)=>t.split('|').map((w,i)=>`<text class="${c}" x="${x}" y="${y+i*29}">${w}</text>`).join('');
  return `<style>:host{display:block;width:1395px;height:664px}svg{display:block}
  text{font-family:"Noto Sans",sans-serif;font-weight:400}
  .l{fill:#eee;stroke:#eaeaea;stroke-width:1}.m{fill:#e0e0e0;stroke:#d6d6d6;stroke-width:1.500}.d{fill:#c9c9c9}
  .t{fill:none;stroke:#cecece;stroke-width:2.500;stroke-dasharray:10 5}.f{fill:none;stroke:#cdcdcd;stroke-width:3}
  .n{font-size:29px;fill:#8e8e8e;text-anchor:middle}
  .p{font-size:26px;fill:#777;text-anchor:middle;paint-order:stroke;stroke:#fafafa;stroke-width:5px;font-weight:500}
  .k{font-size:27.500px;fill:#1d1d1d;text-anchor:middle;font-weight:600}
  .s{fill:#333;paint-order:stroke;stroke:#fff;stroke-width:4px}
  .c,.w{fill:none;stroke-linejoin:round;stroke-linecap:butt}.c{stroke:#e3e3e3}.w{stroke:#fff}</style>
  <svg width="1395" height="664" viewBox="341 472 1395 664"><rect x="341" y="472" width="1395" height="664" fill="#fafafa"/>
  ${each(s=>shape(s.l,'l')+shape(s.m,'m')+shape(s.d,'d')+s.f.map(d=>`<path class="f" d="${d}"/>`).join(''))}
  <g transform="translate(820 470) scale(.33333)">
   <path d="M730,0L740,250L785,500L830,700L905,1020L975,1300L1010,1370L1230,2010H1450L1300,1550L1190,1230L1080,990L1020,700L975,500L930,250L908,0Z" fill="#d0d0d0"/>
   <g fill="none" stroke="#ececec" stroke-width="30"><path d="M692,0L712,250L790,720L830,930L960,1350L1060,1640L1190,2010"/><path d="M958,0L985,300L1060,680L1145,990L1200,1180L1260,1370L1380,1690L1490,2010"/></g>
   <path d="M985,1345L1210,1220" stroke="#f5f5f5" stroke-width="38"/><path d="M1000,1330L1200,1222M1005,1345L1205,1236" stroke="#ccc" stroke-width="3"/>
  </g>
  ${each(s=>s.w.map(r=>`<path class="c" stroke-width="${r[0]+4}" d="${r[1]}"/>`).join(''))}
  ${each(s=>s.w.map(r=>`<path class="w" stroke-width="${r[0]-1}" d="${r[1]}"/>`).join('')+s.t.map(d=>`<path class="t" d="${d}"/>`).join('')+s.z.map(z=>`<path transform="translate(${z[0]} ${z[1]}) rotate(${z[2]})" d="M-38,0H38" stroke="#c9c9c9" stroke-width="20" stroke-dasharray="2 5"/>`).join(''))}
  <g transform="translate(820 470) scale(.33333)" fill="#999">${[[695,48],[711,252],[787,715],[810,830],[841,943],[978,1388],[1019,1500],[1058,1610],[961,18],[966,110],[973,228],[989,344],[1010,459],[1062,690],[1090,804],[1116,917],[1155,1035],[1230,1258],[1270,1368],[1310,1480],[1383,1702],[1420,1813],[237,1815],[282,1938]].map(a=>`<path d="M${a[0]-1},${a[1]-7}l-3,6h2v8h3v-8h2z"/>`).join('')}</g>
  ${each(s=>s.n.map(n=>`<text class="n" x="${n[1]}" y="${n[2]}">${n[0]}</text>`).join('')+s.g.map(g=>`<path transform="translate(${g[0]} ${g[1]})" d="M-7,13V8L-4,4V-8L-2,-13H3L5,-8V4L7,8V13ZM8,-11h5l2,5h-3zM16,-11h5l2,5h-3zM24,-11h5l2,5h-3z" fill="#999" stroke="#fff" stroke-width="1" paint-order="stroke"/>`).join('')+s.s.map(a=>`<text class="s" font-size="${a[3]}" transform="translate(${a[0]} ${a[1]}) rotate(${a[2]})" textLength="${a[5]}" lengthAdjust="spacingAndGlyphs">${a[4]}</text>`).join(''))}
  ${each(s=>s.p.map(p=>icon(p[0],p[1],p[2])+(p[3]?lines(p[3],p[4],p[5],'p'):'')).join(''))}
  ${each(s=>s.k.map(k=>`<rect x="${k[4]-k[6]/2}" y="${k[5]-30}" width="${k[6]}" height="43" rx="10" fill="#fff"/><text class="k" x="${k[4]}" y="${k[5]}">${k[3]}</text>${icon(k[0],k[1],k[2],1)}`).join(''))}
  <g transform="translate(820 470) scale(.33333)"><rect x="145" y="856" width="453" height="58" rx="14" fill="#fff"/><text x="159" y="895" font-size="30" style="font-weight:600" textLength="415">Большая Татарская улиц...</text>
   <circle cx="73" cy="971" r="15" fill="#fff" stroke="#999" stroke-width="2"/><circle cx="73" cy="971" r="9" fill="none" stroke="#999" stroke-width="2"/><circle cx="73" cy="971" r="4" fill="#777"/><path d="M45,925Q70,940 71,957h4Q76,940 101,925z" fill="#888"/><circle cx="73" cy="885" r="54" fill="#858585"/><g transform="translate(73 885)" fill="#fff">${GLYPH.build}</g>
   <path d="M132,702h5v14h4l-8,12-6-13h5zM0,850h12v-4l10,8-10,7v-4H0zM192,1012h5v15h4l-8,12-6-13h5zM-97,670h5v14h4l-8,9-6-10h5z" fill="#777"/><g fill="#888"><circle cx="125" cy="750" r="5"/><circle cx="184" cy="1061" r="5"/><circle cx="-82" cy="714" r="5"/><path d="M828,1078h16v22h-16v-9h-8v-5h8z"/><path d="M207,1362h7v4h-7zM206,1370h4v12h9v4h-13zM235,1362h5v5h-5zM234,1370h6v16h-10v-4h4zM222,1374h4v5h-4zM221,1382h5v10h-5zM278,1328h9l3,5 11-3v4l-11,4-3,8 6,6-6,9h-4l5-9-6-5-8,1v-4l7-1 2-8-6-3z"/></g></g>
  <text x="1290.700" y="920.500" font-size="12" fill="#8e8e8e" textLength="87" lengthAdjust="spacingAndGlyphs">ЖК А-Резиденс</text></svg>`;
});

def('contacts-main',`<style>:host{display:flex;flex-direction:column;height:1235px;box-sizing:border-box;padding:54px 0 0 111px;background:#fff}
.row{display:flex;align-items:flex-start;margin-top:34px;height:199px}
.a{width:402px;margin-top:3px}.p{width:348px;margin-top:2px;--gap:15px}.e{width:315px;margin-top:3px;--gap:14px}.t{line-height:32px}.p fit-text:first-child{margin-left:2px}
.soc{display:flex;margin-top:-1px;gap:21.200px;color:#111}.map{display:flex}.side{width:230px;display:flex;flex-direction:column}.side lang-switch{margin-top:562px}</style>
<sharp-logo style="color:#15161a"></sharp-logo>
<div class="row"><site-nav></site-nav>
<info-block class="a"><fit-text slot="title" w="51">адрес</fit-text><fit-text w="197">115184, Россия, Москва</fit-text><fit-text w="111">д. 35 стр. 7-9</fit-text></info-block>
<info-block class="p"><fit-text slot="title" w="73">телефон</fit-text><fit-text class="t" w="146">+7 495 514 12 34</fit-text><fit-text class="t" w="146">+7 903 786 19 12</fit-text></info-block>
<info-block class="e"><fit-text slot="title" w="51">e-mail</fit-text><fit-text class="t" w="127">info@2sharp.ru</fit-text><fit-text class="t" w="112">pr@2sharp.ru</fit-text></info-block>
<div class="soc"><social-icon kind="vimeo"></social-icon><social-icon kind="facebook"></social-icon><social-icon kind="instagram"></social-icon><social-icon kind="behance"></social-icon><social-icon kind="youtube"></social-icon></div></div>
<div class="map"><div class="side"><lang-switch></lang-switch></div><city-map></city-map></div>`);

def('site-footer',`<style>:host{display:flex;flex-direction:column;justify-content:space-between;height:421px;box-sizing:border-box;padding:54px 0 0 112px;background:var(--dark);color:#fff;--hw:300;--hc:var(--green);--gap:16px}
.top{display:flex;align-items:flex-start}.top sharp-logo{width:386px}.c{width:314px;margin-top:39px}.map{color:var(--green);margin-top:40px}
.bot{display:flex;align-items:flex-start;height:61px}.bot lang-switch{width:386px;margin-top:2px}.copy{display:flex;color:var(--green);font-size:14.500px;line-height:20px;gap:5px}.copy svg{margin-top:2px}
.soc{display:flex;gap:11.500px;color:var(--green);margin:0 8px 0 auto}.up{width:23px;height:37px;background:var(--green);margin:24px 1px 0 0}</style>
<div class="top"><sharp-logo></sharp-logo>
<info-block class="c"><fit-text slot="title" w="51">адрес</fit-text><fit-text w="197">115184, Россия, Москва</fit-text><fit-text w="111">д. 35 стр. 7-9</fit-text><fit-text class="map" w="73">на карте</fit-text></info-block>
<info-block class="c"><fit-text slot="title" w="73">телефон</fit-text><fit-text w="146">+7 495 514 12 34</fit-text><fit-text w="146">+7 903 786 19 12</fit-text></info-block>
<info-block class="c"><fit-text slot="title" w="51">e-mail</fit-text><fit-text w="136">what@2sharp.ru</fit-text></info-block></div>
<div class="bot"><lang-switch></lang-switch><div class="copy"><fit-text w="35">2020</fit-text><svg width="15" height="15" viewBox="0 0 15 15" fill="none" stroke="currentColor" stroke-width="1.500"><circle cx="7.500" cy="7.500" r="6.500"/><path d="M10 5.600A3.200 3.200 0 1 0 10 9.400" stroke-width="1.800"/></svg><fit-text w="114">all rights reserved</fit-text></div>
<div class="soc"><social-icon size="17" kind="vimeo"></social-icon><social-icon size="17" kind="facebook"></social-icon><social-icon size="17" kind="instagram"></social-icon><social-icon size="17" kind="youtube"></social-icon><social-icon size="17" kind="behance"></social-icon></div><div class="up"></div></div>`);

def('contacts-page','<style>:host{display:block;width:1920px;height:1735px;overflow:hidden}</style><news-ticker></news-ticker><contacts-main></contacts-main><site-footer></site-footer>');
</script>
</body>
</html>
